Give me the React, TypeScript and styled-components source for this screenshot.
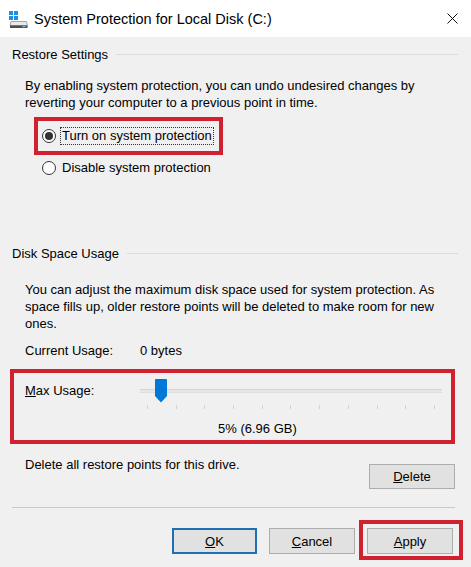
import React from 'react';
import styled, { createGlobalStyle } from 'styled-components';

const GlobalStyle = createGlobalStyle`
  html, body {
    margin: 0;
    padding: 0;
  }

  body {
    background: #f0f0f0;
    font-family: 'Liberation Sans', Arial, sans-serif;
    font-size: 13px;
    color: #000;
  }
`;

const Window = styled.div`
  width: 471px;
  height: 567px;
  display: flex;
  flex-direction: column;
  background: #f0f0f0;
  overflow: hidden;
`;

const TitleBar = styled.div`
  height: 37px;
  flex-shrink: 0;
  display: flex;
  align-items: center;
  padding-left: 8px;
  background: #fff;
`;

const Title = styled.span`
  flex: 1;
  margin-left: 6px;
  font-size: 14.5px;
`;

const CloseButton = styled.div`
  width: 38px;
  height: 37px;
  display: flex;
  align-items: center;
  justify-content: center;
`;

const Body = styled.div`
  display: flex;
  flex-direction: column;
  padding: 0 13px 0 12px;
`;

const GroupHeader = styled.div<{ $top: number }>`
  display: flex;
  align-items: center;
  gap: 8px;
  height: 17px;
  margin-top: ${(p) => p.$top}px;
`;

const GroupLine = styled.div`
  flex: 1;
  height: 1px;
  background: #dcdcdc;
`;

const Paragraph = styled.p<{ $top: number }>`
  margin: ${(p) => p.$top}px 0 0 13px;
  line-height: 17px;
`;

const Highlight = styled.div`
  border: 4px solid #d1202f;
`;

const RadioHighlight = styled(Highlight)`
  align-self: flex-start;
  margin: 6px 0 0 22px;
  padding: 0 5px 0 4px;
  height: 30px;
  display: flex;
  align-items: center;
`;

const RadioRow = styled.label<{ $indent?: number; $top?: number }>`
  display: flex;
  align-items: center;
  gap: 4px;
  height: 17px;
  margin: ${(p) => p.$top ?? 0}px 0 0 ${(p) => p.$indent ?? 0}px;
`;

const RadioCircle = styled.span<{ $checked?: boolean }>`
  width: 14px;
  height: 14px;
  box-sizing: border-box;
  border-radius: 50%;
  border: 1px solid #333;
  background: #fff;
  display: flex;
  align-items: center;
  justify-content: center;

  &::after {
    content: '';
    width: 8px;
    height: 8px;
    border-radius: 50%;
    background: #333;
    display: ${(p) => (p.$checked ? 'block' : 'none')};
  }
`;

const RadioLabel = styled.span<{ $focused?: boolean }>`
  padding: 0 1px;
  line-height: 16px;
  border: 1px dotted ${(p) => (p.$focused ? '#333' : 'transparent')};
`;

const InfoRow = styled.div`
  display: flex;
  margin: 10px 0 0 13px;
  line-height: 17px;
`;

const InfoLabel = styled.span`
  width: 115px;
`;

const UsageBox = styled(Highlight)`
  width: 417px;
  margin: 10px 0 0 -2px;
  padding: 4px 9px 3px 11px;
  display: flex;
  flex-direction: column;
`;

const SliderRow = styled.div`
  display: flex;
  align-items: flex-start;
`;

const SliderLabel = styled.span`
  width: 115px;
  margin-top: 5px;
  line-height: 17px;
`;

const Slider = styled.div`
  position: relative;
  width: 302px;
  height: 32px;
`;

const Track = styled.div`
  position: absolute;
  left: 0;
  right: 0;
  top: 12px;
  height: 2px;
  background: #e7e7e7;
  border-top: 1px solid #d4d4d4;
  border-bottom: 1px solid #dedede;
`;

const Thumb = styled.svg`
  position: absolute;
  left: 15px;
  top: 2px;
`;

const Ticks = styled.div`
  position: absolute;
  left: 7px;
  right: 7px;
  top: 28px;
  display: flex;
  justify-content: space-between;
`;

const Tick = styled.span`
  width: 1px;
  height: 4px;
  background: #d2d2d2;
`;

const SliderValue = styled.div`
  margin: 11px 0 0 193px;
  line-height: 17px;
`;

const DeleteRow = styled.div`
  display: flex;
  justify-content: space-between;
  align-items: flex-start;
  margin-top: 12px;
`;

const DeleteText = styled.span`
  margin-left: 13px;
  line-height: 17px;
`;

const Button = styled.button<{ $default?: boolean }>`
  width: ${(p) => (p.$default ? 85 : 86)}px;
  height: 26px;
  box-sizing: border-box;
  padding: 0;
  background: #e1e1e1;
  border: ${(p) => (p.$default ? '2px solid #1f6fb5' : '1px solid #adadad')};
  font-family: 'Liberation Sans', Arial, sans-serif;
  font-size: 13px;
  color: #000;
`;

const DeleteButton = styled(Button)`
  margin: 8px 3px 0 0;
  height: 25px;
`;

const Separator = styled.div`
  height: 1px;
  margin-top: 18px;
  background: #c8c8c8;
  margin-right: 3px;
`;

const Footer = styled.div`
  display: flex;
  justify-content: flex-end;
  align-items: flex-start;
  gap: 12px;
  margin: 12px -5px 0 0;
`;

const FooterButton = styled(Button)`
  margin-top: 8px;
`;

const ApplyHighlight = styled(Highlight)`
  margin-left: -8px;
  padding: 4px 6px 2px 4px;
`;

const DriveIcon = () => (
  <svg width="20" height="20" viewBox="0 0 20 20">
    <path d="M3 12.5 H18.5 L19.5 16.5 H2 Z" fill="#e9e9e9" stroke="#8d8d8d" strokeWidth="0.8" />
    <rect x="2" y="16.5" width="17.5" height="2.5" fill="#4e4e4e" />
    <rect x="14.5" y="17.2" width="3" height="1" fill="#7fd0ff" />
    <rect x="1" y="2" width="4" height="4" fill="#1d8fe3" />
    <rect x="6" y="2" width="4" height="4" fill="#1d8fe3" />
    <rect x="1" y="7" width="4" height="4" fill="#1d8fe3" />
    <rect x="6" y="7" width="4" height="4" fill="#1d8fe3" />
  </svg>
);

const CloseIcon = () => (
  <svg width="11" height="11" viewBox="0 0 11 11">
    <path d="M0.5 0.5 L10.5 10.5 M10.5 0.5 L0.5 10.5" stroke="#111" strokeWidth="1" />
  </svg>
);

const App = () => {
  const ticks = Array.from({ length: 11 });

  return (
    <Window>
      <GlobalStyle />
      <TitleBar>
        <DriveIcon />
        <Title>System Protection for Local Disk (C:)</Title>
        <CloseButton>
          <CloseIcon />
        </CloseButton>
      </TitleBar>

      <Body>
        <GroupHeader $top={9}>
          <span>Restore Settings</span>
          <GroupLine />
        </GroupHeader>
        <Paragraph $top={14}>
          By enabling system protection, you can undo undesired changes by
          <br />
          reverting your computer to a previous point in time.
        </Paragraph>

        <RadioHighlight>
          <RadioRow>
            <RadioCircle $checked />
            <RadioLabel $focused>Turn on system protection</RadioLabel>
          </RadioRow>
        </RadioHighlight>
        <RadioRow $indent={30} $top={4}>
          <RadioCircle />
          <RadioLabel>Disable system protection</RadioLabel>
        </RadioRow>

        <GroupHeader $top={69}>
          <span>Disk Space Usage</span>
          <GroupLine />
        </GroupHeader>
        <Paragraph $top={19}>
          You can adjust the maximum disk space used for system protection. As
          <br />
          space fills up, older restore points will be deleted to make room for new
          <br />
          ones.
        </Paragraph>

        <InfoRow>
          <InfoLabel>Current Usage:</InfoLabel>
          <span>0 bytes</span>
        </InfoRow>

        <UsageBox>
          <SliderRow>
            <SliderLabel>
              <u>M</u>ax Usage:
            </SliderLabel>
            <Slider>
              <Track />
              <Ticks>
                {ticks.map((_, i) => (
                  <Tick key={i} />
                ))}
              </Ticks>
              <Thumb width="12" height="24" viewBox="0 0 12 24">
                <path d="M0 1 Q0 0 1 0 H11 Q12 0 12 1 V17 L6 23.5 L0 17 Z" fill="#0078d7" />
              </Thumb>
            </Slider>
          </SliderRow>
          <SliderValue>5% (6.96 GB)</SliderValue>
        </UsageBox>

        <DeleteRow>
          <DeleteText>Delete all restore points for this drive.</DeleteText>
          <DeleteButton>
            <u>D</u>elete
          </DeleteButton>
        </DeleteRow>

        <Separator />

        <Footer>
          <FooterButton $default>
            <u>O</u>K
          </FooterButton>
          <FooterButton>
            <u>C</u>ancel
          </FooterButton>
          <ApplyHighlight>
            <Button>
              <u>A</u>pply
            </Button>
          </ApplyHighlight>
        </Footer>
      </Body>
    </Window>
  );
};

export default App;
